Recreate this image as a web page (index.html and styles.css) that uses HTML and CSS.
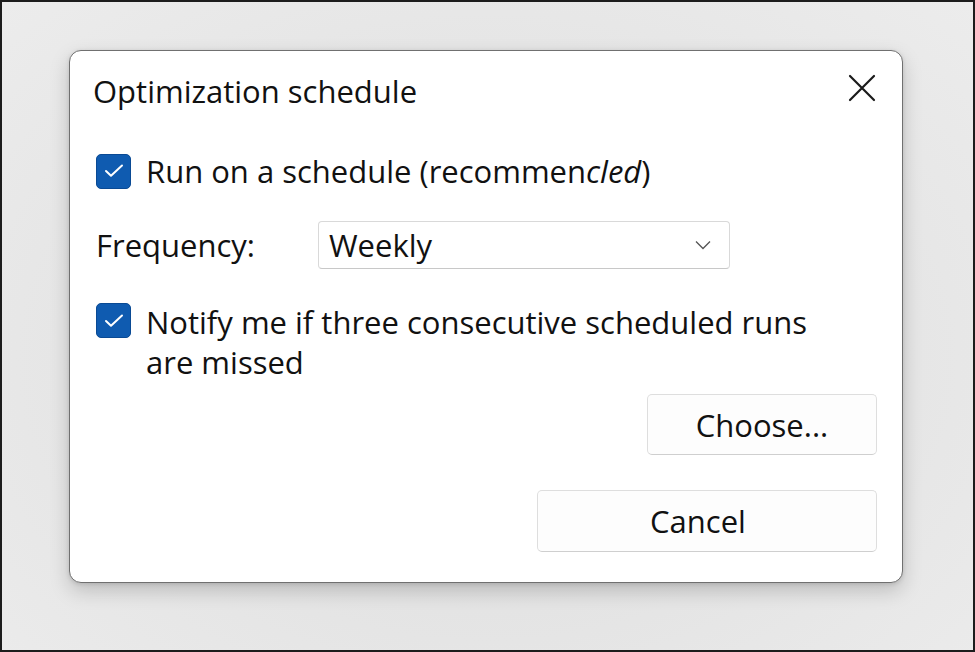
FILE: index.html
```html
<!DOCTYPE html>
<html>
<head>
<meta charset="utf-8">
<link rel="stylesheet" href="styles.css">
</head>
<body>
<div class="screen">
  <div class="dialog">
    <div class="header">
      <div class="title">Optimization schedule</div>
      <button class="close" aria-label="Close">
        <svg width="28" height="28" viewBox="0 0 28 28"><path d="M2 2 L26 26 M26 2 L2 26" stroke="#1a1a1a" stroke-width="2.2" fill="none" stroke-linecap="round"/></svg>
      </button>
    </div>
    <div class="row row-check1">
      <span class="check"><svg width="20" height="16" viewBox="0 0 20 16"><path d="M2 8 L7 12.8 L18 2.5" stroke="#fff" stroke-width="2" fill="none" stroke-linecap="round" stroke-linejoin="round"/></svg></span>
      <span class="label">Run on a schedule (recommen<i>cled</i>)</span>
    </div>
    <div class="row row-freq">
      <span class="freq-label">Frequency:</span>
      <div class="select">
        <span>Weekly</span>
        <svg width="16" height="10" viewBox="0 0 16 10"><path d="M1 1.5 L8 8.5 L15 1.5" stroke="#555" stroke-width="1.3" fill="none"/></svg>
      </div>
    </div>
    <div class="row row-check2">
      <span class="check"><svg width="20" height="16" viewBox="0 0 20 16"><path d="M2 8 L7 12.8 L18 2.5" stroke="#fff" stroke-width="2" fill="none" stroke-linecap="round" stroke-linejoin="round"/></svg></span>
      <span class="label multi">Notify me if three consecutive scheduled runs<br>are missed</span>
    </div>
    <div class="btn-row btn-row-choose"><button class="btn btn-choose">Choose...</button></div>
    <div class="btn-row btn-row-cancel"><button class="btn btn-cancel">Cancel</button></div>
  </div>
</div>
</body>
</html>
```
FILE: styles.css
```css
html, body {
  margin: 0;
  padding: 0;
}
body {
  font-family: "Open Sans", "Noto Sans", sans-serif;
  color: #111;
}
.screen {
  box-sizing: border-box;
  width: 975px;
  height: 652px;
  border: 2px solid #1c1c1c;
  background: radial-gradient(ellipse at 50% 55%, #d9d9d9 0%, #e4e4e4 50%, #ececec 100%);
  padding: 48px 0 0 67px;
}
.dialog {
  box-sizing: border-box;
  width: 834px;
  height: 533px;
  background: #fff;
  border: 1.5px solid #707070;
  border-radius: 12px;
  box-shadow: 0 8px 20px rgba(0,0,0,0.18), 0 1px 4px rgba(0,0,0,0.12);
  padding: 0 25px 0 26px;
  display: flex;
  flex-direction: column;
}
.header {
  height: 81px;
  display: flex;
  align-items: center;
  justify-content: space-between;
}
.title {
  font-size: 31px;
  margin-left: -3px;
  margin-top: -2px;
}
.close {
  border: 0;
  background: none;
  padding: 0;
  width: 28px;
  height: 28px;
  margin-right: 1px;
  margin-top: -7px;
}
.row {
  display: flex;
  align-items: center;
  font-size: 31px;
}
.row-check1 {
  margin-top: 21px;
  height: 36px;
}
.check {
  box-sizing: border-box;
  width: 35px;
  height: 35px;
  border-radius: 5px;
  background: #0f5bb0;
  border: 1px solid #0a4a94;
  display: flex;
  align-items: center;
  justify-content: center;
  flex: none;
}
.label {
  margin-left: 15px;
}
.row-freq {
  margin-top: 32px;
  height: 48px;
}
.freq-label {
  width: 222px;
}
.select {
  box-sizing: border-box;
  width: 412px;
  height: 48px;
  border: 1px solid #d9d9d9;
  border-bottom-color: #c8c8c8;
  border-radius: 4px;
  display: flex;
  align-items: center;
  justify-content: space-between;
  padding: 0 18px 0 10px;
}
.row-check2 {
  margin-top: 34px;
  align-items: flex-start;
}
.label.multi {
  line-height: 40px;
  margin-top: -1px;
}
.btn-row {
  display: flex;
  justify-content: flex-end;
}
.btn {
  box-sizing: border-box;
  font-family: inherit;
  font-size: 31px;
  color: #111;
  background: #fdfdfd;
  border: 1px solid #dedede;
  border-bottom-color: #cfcfcf;
  border-radius: 5px;
  padding: 0;
}
.btn-row-choose {
  margin-top: 12px;
}
.btn-choose {
  width: 230px;
  height: 61px;
}
.btn-row-cancel {
  margin-top: 35px;
}
.btn-cancel {
  width: 340px;
  height: 62px;
  padding-right: 18px;
}
```
